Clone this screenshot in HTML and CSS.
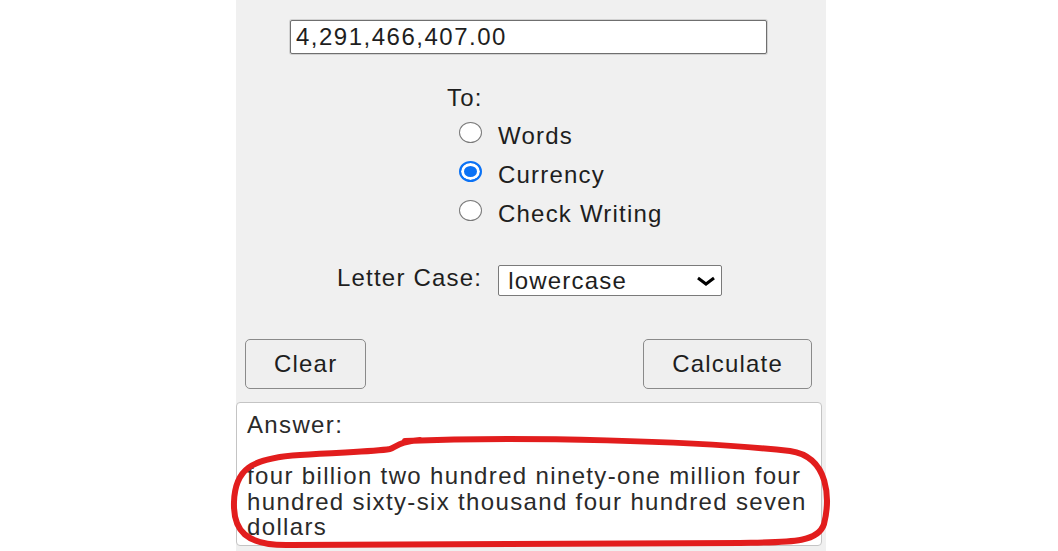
FILE: index.html
```html
<!DOCTYPE html>
<html lang="en">
<head>
<meta charset="utf-8">
<title>Number to Words Converter</title>
<link rel="stylesheet" href="styles.css">
</head>
<body>
<div class="panel">
  <input class="amount" type="text" value="4,291,466,407.00">
  <div class="to-group">
    <div class="to-label">To:</div>
    <div class="radios">
      <label class="radio-row"><input class="radio" type="radio" name="to"><span>Words</span></label>
      <label class="radio-row"><input class="radio" type="radio" name="to" checked><span>Currency</span></label>
      <label class="radio-row"><input class="radio" type="radio" name="to"><span>Check Writing</span></label>
    </div>
  </div>
  <div class="case-row">
    <label class="case-label" for="case">Letter Case:</label>
    <select id="case" class="case-select"><option>lowercase</option></select>
  </div>
  <div class="buttons">
    <button class="btn" type="button">Clear</button>
    <button class="btn" type="button">Calculate</button>
  </div>
  <div class="answer">Answer:<br><br>four billion two hundred ninety-one million four hundred sixty-six thousand four hundred seven dollars</div>
</div>
<svg class="annotation" width="1058" height="551" viewBox="0 0 1058 551" aria-hidden="true">
  <path d="M405 441 C520 436 700 441 790 451 C830 457 830 500 824 524 C818 543 790 542 740 543 L290 545 C245 546 233 530 234 502 C235 470 250 458 300 455 C340 452 372 452 390 449 C397 446 402 441 420 440" fill="none" stroke="#e21d1d" stroke-width="6" stroke-linecap="round" stroke-linejoin="round"/>
</svg>
</body>
</html>
```
FILE: styles.css
```css
html, body {
  margin: 0;
  padding: 0;
  background: #ffffff;
}
body {
  position: relative;
  width: 1058px;
  height: 551px;
  overflow: hidden;
  font-family: "Liberation Sans", Arial, sans-serif;
  font-size: 24px;
  letter-spacing: 1.2px;
  color: #1e1e1e;
}
.panel {
  box-sizing: border-box;
  width: 590px;
  height: 551px;
  margin-left: 236px;
  padding-top: 20px;
  background: #f0f0f0;
}
.amount {
  display: block;
  box-sizing: border-box;
  width: 477px;
  height: 34px;
  margin: 0 0 0 54px;
  padding: 0 5px;
  border: 1px solid #6f6f6f;
  box-shadow: 0 0 0 1px rgba(0, 0, 0, 0.12);
  border-radius: 2px;
  background: #ffffff;
  font-family: inherit;
  font-size: 24px;
  letter-spacing: 1.5px;
  color: #1e1e1e;
  outline: none;
}
.to-group {
  margin: 31px 0 0 211px;
}
.to-label {
  line-height: 25px;
}
.radios {
  margin-top: 6px;
  padding-left: 12px;
}
.radio-row {
  display: flex;
  align-items: center;
  height: 39px;
  line-height: 39px;
}
.radio {
  appearance: none;
  -webkit-appearance: none;
  box-sizing: border-box;
  width: 23px;
  height: 21px;
  margin: 0 16px 7px 0;
  border: 1.5px solid #7a7a7a;
  border-radius: 50%;
  background: #ffffff;
}
.radio:checked {
  border: 2.5px solid #0b72f5;
  background: #0b72f5;
  box-shadow: inset 0 0 0 3px #ffffff;
}
.case-row {
  display: flex;
  align-items: center;
  height: 31px;
  margin: 32px 0 0 101px;
}
.case-label {
  line-height: 25px;
  margin: 0 16px 7px 0;
}
.case-select {
  appearance: none;
  -webkit-appearance: none;
  box-sizing: border-box;
  width: 224px;
  height: 31px;
  padding: 0 30px 0 9px;
  border: 1px solid #7a7a7a;
  border-radius: 2px;
  background: #ffffff url("data:image/svg+xml,%3Csvg xmlns='http://www.w3.org/2000/svg' width='20' height='10' viewBox='0 0 20 10'%3E%3Cpath d='M2 2l8 6 8-6' fill='none' stroke='%23000' stroke-width='3'/%3E%3C/svg%3E") no-repeat right 5px center;
  font-family: inherit;
  font-size: 24px;
  letter-spacing: 1.2px;
  color: #1e1e1e;
}
.buttons {
  display: flex;
  justify-content: space-between;
  margin-top: 43px;
  padding: 0 14px 0 9px;
}
.btn {
  box-sizing: border-box;
  height: 50px;
  padding: 0 28px;
  border: 1px solid #8a8a8a;
  border-radius: 5px;
  background: #efefef;
  font-family: inherit;
  font-size: 24px;
  letter-spacing: 1.2px;
  color: #1e1e1e;
}
.answer {
  box-sizing: border-box;
  width: 586px;
  height: 144px;
  margin-top: 13px;
  padding: 9px 8px 6px 10px;
  border: 1px solid #c4c4c4;
  border-radius: 4px;
  background: #ffffff;
  line-height: 25.5px;
  letter-spacing: 1.35px;
  color: #2a2a2a;
}
.annotation {
  position: absolute;
  left: 0;
  top: 0;
  pointer-events: none;
}
```
